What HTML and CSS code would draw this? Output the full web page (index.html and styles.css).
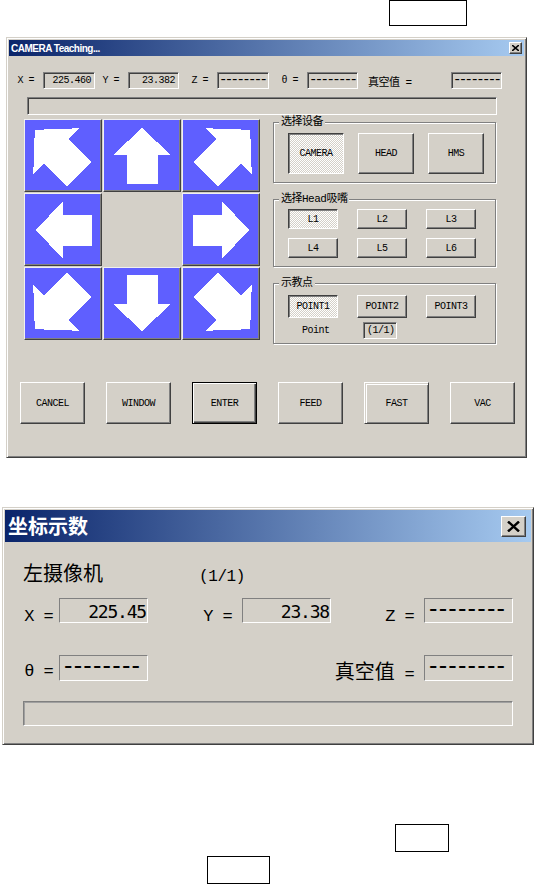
FILE: index.html
```html
<!DOCTYPE html>
<html lang="zh-CN">
<head>
    <meta charset="UTF-8">
    <meta name="viewport" content="width=device-width, initial-scale=1.0">
    <title>CAMERA Teaching</title>
    <link rel="stylesheet" href="styles.css">
</head>
<body>
    <div class="mark mark-top"></div>

    <!-- window 1: teaching dialog -->
    <div class="win win-teach">
        <div class="titlebar">
            <span class="title">CAMERA Teaching...</span>
            <span class="close-btn">
                <svg width="7" height="6" viewBox="0 0 7 6"><path d="M0 0L7 6M7 0L0 6" stroke="#000" stroke-width="1.6"/></svg>
            </span>
        </div>
        <div class="teach-body">
            <div class="readout">
                <span class="lbl">X =</span><span class="field num">225.460</span>
                <span class="lbl">Y =</span><span class="field num">23.382</span>
                <span class="lbl">Z =</span><span class="field dash">--------</span>
                <span class="lbl">θ =</span><span class="field dash">--------</span>
                <span class="lbl lbl-vac">真空值 =</span><span class="field dash">--------</span>
            </div>
            <div class="progress"></div>

            <div class="main">
                <div class="jog">
                    <div class="jog-key"><svg viewBox="1 1 76 71"><path transform="translate(33 33) rotate(-45) scale(1.12)" d="M0-28L29-1H15.5V28H-15.5V-1H-29Z"/></svg></div>
                    <div class="jog-key"><svg viewBox="1 1 76 71"><path transform="translate(39 37)" d="M0-28L29-1H15.5V28H-15.5V-1H-29Z"/></svg></div>
                    <div class="jog-key"><svg viewBox="1 1 76 71"><path transform="translate(46 33) rotate(45) scale(1.12)" d="M0-28L29-1H15.5V28H-15.5V-1H-29Z"/></svg></div>
                    <div class="jog-key"><svg viewBox="1 1 76 71"><path transform="translate(40 37) rotate(-90)" d="M0-28L29-1H15.5V28H-15.5V-1H-29Z"/></svg></div>
                    <div class="jog-gap"></div>
                    <div class="jog-key"><svg viewBox="1 1 76 71"><path transform="translate(39 37) rotate(90)" d="M0-28L29-1H15.5V28H-15.5V-1H-29Z"/></svg></div>
                    <div class="jog-key"><svg viewBox="1 1 76 71"><path transform="translate(33 40) rotate(-135) scale(1.12)" d="M0-28L29-1H15.5V28H-15.5V-1H-29Z"/></svg></div>
                    <div class="jog-key"><svg viewBox="1 1 76 71"><path transform="translate(39 36) rotate(180)" d="M0-28L29-1H15.5V28H-15.5V-1H-29Z"/></svg></div>
                    <div class="jog-key"><svg viewBox="1 1 76 71"><path transform="translate(46 40) rotate(135) scale(1.12)" d="M0-28L29-1H15.5V28H-15.5V-1H-29Z"/></svg></div>
                </div>

                <div class="groups">
                    <fieldset class="group">
                        <legend>选择设备</legend>
                        <div class="group-in dev-row">
                            <button class="btn btn-on">CAMERA</button>
                            <button class="btn">HEAD</button>
                            <button class="btn">HMS</button>
                        </div>
                    </fieldset>
                    <fieldset class="group">
                        <legend>选择Head吸嘴</legend>
                        <div class="group-in nozzle-grid">
                            <button class="btn btn-on">L1</button>
                            <button class="btn">L2</button>
                            <button class="btn">L3</button>
                            <button class="btn">L4</button>
                            <button class="btn">L5</button>
                            <button class="btn">L6</button>
                        </div>
                    </fieldset>
                    <fieldset class="group">
                        <legend>示教点</legend>
                        <div class="group-in point-grid">
                            <button class="btn btn-on">POINT1</button>
                            <button class="btn">POINT2</button>
                            <button class="btn">POINT3</button>
                        </div>
                        <div class="point-row">
                            <span class="point-lbl">Point</span>
                            <span class="field point-val">(1/1)</span>
                        </div>
                    </fieldset>
                </div>
            </div>

            <div class="actions">
                <button class="btn act">CANCEL</button>
                <button class="btn act">WINDOW</button>
                <button class="btn act btn-default">ENTER</button>
                <button class="btn act">FEED</button>
                <button class="btn act btn-focus">FAST</button>
                <button class="btn act">VAC</button>
            </div>
        </div>
    </div>

    <!-- window 2: coordinate readout -->
    <div class="win win-coord">
        <div class="titlebar titlebar-lg">
            <span class="title-lg">坐标示数</span>
            <span class="close-btn close-lg">
                <svg width="13" height="11" viewBox="0 0 13 11"><path d="M1 0.5L12 10.5M12 0.5L1 10.5" stroke="#000" stroke-width="2.4"/></svg>
            </span>
        </div>
        <div class="coord-body">
            <div class="coord-head">
                <span class="cam">左摄像机</span>
                <span class="count">(1/1)</span>
            </div>
            <div class="coord-row">
                <span class="c-lbl c-first">X =</span><span class="c-field num">225.45</span>
                <span class="c-lbl">Y =</span><span class="c-field num">23.38</span>
                <span class="c-lbl">Z =</span><span class="c-field dash">--------</span>
            </div>
            <div class="coord-row row-two">
                <span class="c-lbl c-first c-theta">θ =</span><span class="c-field dash">--------</span>
                <span class="c-lbl c-vac"><span class="cjk">真空值</span> =</span><span class="c-field dash">--------</span>
            </div>
            <div class="c-progress"></div>
        </div>
    </div>

    <div class="mark mark-a"></div>
    <div class="mark mark-b"></div>
</body>
</html>
```

FILE: styles.css
```css
* {
    box-sizing: border-box;
}
body {
    margin: 0;
    background: #fff;
    font-family: "Liberation Mono", "Noto Sans CJK SC", monospace;
}

/* plain black frames on the page */
.mark {
    border: 1px solid #000;
    height: 28px;
}
.mark-top {
    width: 78px;
    height: 26px;
    margin-left: 389px;
}
.mark-a {
    width: 54px;
    margin: 79px 0 0 395px;
}
.mark-b {
    width: 63px;
    margin: 4px 0 0 207px;
}

/* classic window frame */
.win {
    background: #d4d0c8;
    border: 1px solid;
    border-color: #d4d0c8 #404040 #404040 #d4d0c8;
    box-shadow: inset 1px 1px #fff, inset -1px -1px #808080;
    padding: 2px;
}
.titlebar {
    display: flex;
    align-items: center;
    justify-content: space-between;
    height: 16px;
    padding: 0 2px;
    background: linear-gradient(to right, #0a246a, #a6caf0);
}
.title {
    color: #fff;
    font: bold 10px "Liberation Sans", Arial, sans-serif;
}
.close-btn {
    display: flex;
    align-items: center;
    justify-content: center;
    width: 13px;
    height: 12px;
    background: #d4d0c8;
    border: 1px solid;
    border-color: #fff #404040 #404040 #fff;
    box-shadow: inset -1px -1px #808080;
}

/* window 1 */
.win-teach {
    width: 521px;
    height: 421px;
    margin: 11px 0 0 6px;
    font-size: 10px;
    letter-spacing: -0.5px;
    color: #000;
}
.readout {
    display: grid;
    grid-template-columns: 34px 52px 33px 51px 38px 52px 38px 51px 93px 51px;
    align-items: center;
    margin-top: 16px;
    height: 17px;
}
.lbl {
    text-align: right;
    padding-right: 9px;
}
.lbl-vac {
    text-align: left;
    padding: 0 0 0 10px;
    font-size: 11px;
}
.field {
    height: 17px;
    line-height: 15px;
    padding: 0 3px;
    white-space: nowrap;
    background: #d4d0c8;
    border: 1px solid;
    border-color: #808080 #fff #fff #808080;
    box-shadow: inset 1px 1px #404040, inset -1px -1px #d4d0c8;
}
.field.num {
    text-align: right;
}
.field.dash {
    padding-left: 1px;
    font-size: 14px;
    letter-spacing: -2.6px;
}
.progress {
    width: 470px;
    height: 18px;
    margin: 8px 0 0 18px;
    border: 1px solid;
    border-color: #808080 #fff #fff #808080;
    box-shadow: inset 1px 1px #404040;
}

.main {
    display: flex;
    align-items: flex-start;
    margin-top: 1px;
    padding-left: 15px;
}
.jog {
    display: grid;
    grid-template-columns: repeat(3, 78px);
    grid-template-rows: repeat(3, 73px);
    gap: 1px;
    margin-top: 3px;
}
.jog-key {
    background: #5f5fff;
    border: 1px solid;
    border-color: #f0f0f0 #404040 #404040 #f0f0f0;
    box-shadow: inset -1px -1px #808080;
}
.jog-key svg {
    display: block;
    width: 76px;
    height: 71px;
    fill: #fff;
    shape-rendering: crispEdges;
}

.groups {
    display: flex;
    flex-direction: column;
    gap: 10px;
    width: 223px;
    margin-left: 13px;
}
.group {
    margin: 0;
    padding: 0;
    min-width: 0;
    border: 1px solid #808080;
    box-shadow: inset 1px 1px #fff, 1px 1px #fff;
}
.group legend {
    margin-left: 5px;
    padding: 0 2px;
    line-height: 12px;
    font-size: 11px;
    background: #d4d0c8;
}
.group-in {
    padding-left: 14px;
}
.dev-row {
    display: flex;
    gap: 14px;
    padding-top: 5px;
    padding-bottom: 8px;
}
.dev-row .btn {
    width: 56px;
    height: 41px;
}
.nozzle-grid,
.point-grid {
    display: grid;
    grid-template-columns: repeat(3, 50px);
    column-gap: 19px;
}
.nozzle-grid {
    grid-auto-rows: 20px;
    row-gap: 9px;
    padding-top: 4px;
    padding-bottom: 8px;
}
.point-grid {
    grid-auto-rows: 23px;
    padding-top: 6px;
}
.point-row {
    display: flex;
    align-items: center;
    margin-top: 4px;
    padding: 0 0 4px 28px;
}
.point-lbl {
    width: 61px;
}
.point-val {
    width: 34px;
}

.btn {
    padding: 0;
    font-family: "Liberation Mono", monospace;
    font-size: 10px;
    letter-spacing: -0.5px;
    color: #000;
    background: #d4d0c8;
    border: 1px solid;
    border-color: #fff #404040 #404040 #fff;
    box-shadow: inset -1px -1px #808080;
}
.btn-on {
    border-color: #404040 #fff #fff #404040;
    box-shadow: inset 1px 1px #808080;
    background: repeating-conic-gradient(#fff 0 25%, #d4d0c8 0 50%) 0 0 / 2px 2px;
}
.btn-default {
    border-color: #000;
    box-shadow: inset 1px 1px #fff, inset -1px -1px #404040, inset -2px -2px #808080;
}
.btn-focus {
    box-shadow: inset 1px 1px #d4d0c8, inset 2px 2px #fff, inset -1px -1px #808080;
}
.actions {
    display: flex;
    justify-content: space-between;
    margin-top: 38px;
    padding: 0 9px 0 11px;
}
.act {
    width: 65px;
    height: 42px;
}

/* window 2 */
.win-coord {
    width: 532px;
    margin: 49px 0 0 2px;
    color: #000;
}
.titlebar-lg {
    height: 32px;
    padding: 0 5px 0 3px;
}
.title-lg {
    color: #fff;
    font: bold 20px/1 "Noto Sans CJK SC", sans-serif;
}
.close-lg {
    width: 25px;
    height: 21px;
}
.coord-body {
    padding-bottom: 16px;
}
.coord-head {
    display: flex;
    align-items: baseline;
    margin-top: 20px;
    padding-left: 18px;
    height: 22px;
}
.cam {
    font: 20px/22px "Noto Sans CJK SC", sans-serif;
    width: 176px;
}
.count {
    font-size: 16px;
    letter-spacing: -0.4px;
}
.coord-row {
    display: grid;
    grid-template-columns: 54px 89px 94px 89px 93px 89px;
    align-items: end;
    margin-top: 14px;
    height: 25px;
}
.row-two {
    margin-top: 32px;
    height: 26px;
}
.c-lbl {
    font-size: 17px;
    letter-spacing: -0.6px;
    line-height: 16px;
    text-align: right;
    padding-right: 10px;
    margin-bottom: -2px;
    white-space: nowrap;
}
.c-first {
    padding-right: 6px;
}
.c-theta {
    margin-bottom: 1px;
}
.c-vac {
    grid-column: 3 / 6;
    margin-bottom: -4px;
    line-height: 20px;
}
.cjk {
    font: 20px/20px "Noto Sans CJK SC", sans-serif;
    letter-spacing: 0;
}
.c-field {
    height: 100%;
    padding: 0 1px;
    font: 18px/21px "DejaVu Sans Mono", monospace;
    letter-spacing: -1.2px;
    white-space: nowrap;
    border: 1px solid;
    border-color: #808080 #fff #fff #808080;
}
.c-field.num {
    text-align: right;
    padding-top: 2px;
}
.c-field.dash {
    font-size: 24px;
    line-height: 20px;
    letter-spacing: -4.8px;
}
.c-progress {
    width: 490px;
    height: 25px;
    margin: 20px 0 0 18px;
    border: 1px solid;
    border-color: #808080 #fff #fff #808080;
    box-shadow: inset 1px 1px #a0a0a0;
}
```
